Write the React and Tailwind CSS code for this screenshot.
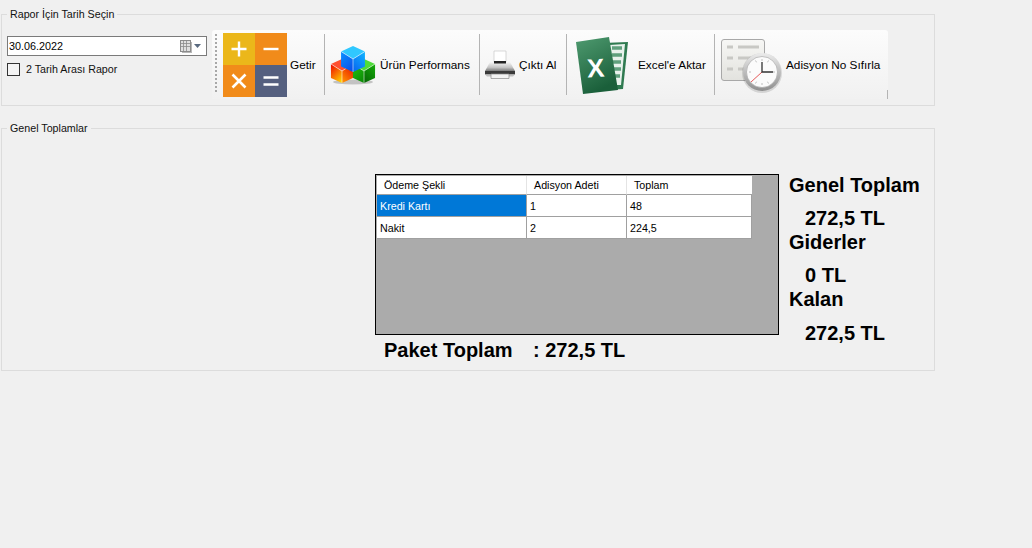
import React from "react";

const cellText = "text-[10.700px] leading-none text-black";

function CalcIcon() {
  return (
    <div className="grid grid-cols-2 w-16 h-16 shrink-0">
      <div className="bg-[#ebb71a] flex items-center justify-center">
        <svg width="20" height="20" viewBox="0 0 20 20" stroke="white" strokeWidth="2.4">
          <path d="M10 2.500v15M2.500 10h15" />
        </svg>
      </div>
      <div className="bg-[#f18b1a] flex items-center justify-center">
        <svg width="20" height="20" viewBox="0 0 20 20" stroke="white" strokeWidth="2.400">
          <path d="M2.500 10h15" />
        </svg>
      </div>
      <div className="bg-[#f18b1a] flex items-center justify-center">
        <svg width="20" height="20" viewBox="0 0 20 20" stroke="white" strokeWidth="2.600">
          <path d="M3.500 3.500l13 13M16.500 3.500l-13 13" />
        </svg>
      </div>
      <div className="bg-[#55607f] flex items-center justify-center">
        <svg width="20" height="20" viewBox="0 0 20 20" stroke="white" strokeWidth="2.400">
          <path d="M2.500 6.500h15M2.500 13.500h15" />
        </svg>
      </div>
    </div>
  );
}

function Cube({ x, y, r, id, top, left, right }) {
  const h = r * 0.58;
  return (
    <g>
      <defs>
        <linearGradient id={id} x1="0.2" y1="0" x2="0.8" y2="1">
          <stop offset="0" stopColor={left[0]} />
          <stop offset="1" stopColor={left[1]} />
        </linearGradient>
        <linearGradient id={id + "r"} x1="0.8" y1="0" x2="0.2" y2="1">
          <stop offset="0" stopColor={right[0]} />
          <stop offset="1" stopColor={right[1]} />
        </linearGradient>
      </defs>
      <path d={`M${x} ${y - r}L${x + r * 0.92} ${y - h}L${x} ${y}L${x - r * 0.92} ${y - h}Z`} fill={top} />
      <path d={`M${x - r * 0.92} ${y - h}L${x} ${y}V${y + r}L${x - r * 0.92} ${y + h}Z`} fill={`url(#${id})`} />
      <path d={`M${x + r * 0.92} ${y - h}L${x} ${y}V${y + r}L${x + r * 0.92} ${y + h}Z`} fill={`url(#${id}r)`} />
      <path d={`M${x} ${y}V${y + r}M${x} ${y}L${x - r * 0.92} ${y - h}M${x} ${y}L${x + r * 0.92} ${y - h}`} stroke="white" strokeOpacity="0.6" strokeWidth="0.900" fill="none" />
    </g>
  );
}

function CubesIcon() {
  return (
    <svg width="46" height="40" viewBox="0 0 46 40" className="shrink-0">
      <ellipse cx="23" cy="37" rx="20" ry="2.500" fill="#000" opacity="0.2" />
      <Cube x={12} y={26} r={12} id="cr" top="#ff5030" left={["#f01400", "#ffd000"]} right={["#e81400", "#ff9000"]} />
      <Cube x={34} y={26} r={12} id="cg" top="#4fdc3a" left={["#22c010", "#0b8a06"]} right={["#14a80a", "#066a04"]} />
      <Cube x={23} y={14} r={13} id="cb" top="#30c8ff" left={["#0a8cff", "#0a50e8"]} right={["#10b0ff", "#0868f0"]} />
    </svg>
  );
}

function PrinterIcon() {
  return (
    <svg width="32" height="30" viewBox="0 0 32 30" className="shrink-0">
      <defs>
        <linearGradient id="pb" x1="0" y1="0" x2="0" y2="1">
          <stop offset="0" stopColor="#f6f6f6" />
          <stop offset="0.6" stopColor="#c4c4c4" />
          <stop offset="1" stopColor="#7a7a7a" />
        </linearGradient>
      </defs>
      <path d="M10 1h12v12H10z" fill="#fff" stroke="#c8c8c8" strokeWidth="0.7" />
      <path d="M6 12h20l5 9H1z" fill="url(#pb)" />
      <path d="M10 11h12v2.500H10z" fill="#222" />
      <path d="M1 21h30v3.500H1z" fill="#3a3a3a" />
      <path d="M1 24.500h30l-2 2H3z" fill="#c0c0c0" />
      <path d="M7 24h18v4.500H7z" fill="#f2f2f2" stroke="#8a8a8a" strokeWidth="0.7" />
    </svg>
  );
}

function ExcelIcon() {
  return (
    <svg width="54" height="59" viewBox="0 0 54 59" className="shrink-0 mt-[3px]">
      <defs>
        <linearGradient id="xg" x1="0" y1="0" x2="0.4" y2="1">
          <stop offset="0" stopColor="#4f9b70" />
          <stop offset="1" stopColor="#1a5f3a" />
        </linearGradient>
      </defs>
      <path d="M28 6l25-1-5 47-16 1z" fill="#2f7a50" />
      <path d="M34 8l16-1-4 41-12 0z" fill="#e8f2ec" />
      <path d="M37 11h10M37 18h10M36 25h10M36 32h10M36 39h9" stroke="#5fa07c" strokeWidth="3.500" />
      <path d="M1 5l33-5 9 53-35 4z" fill="url(#xg)" />
      <text x="12" y="40" fontFamily="Liberation Sans, sans-serif" fontWeight="700" fontSize="26" fill="#fff" transform="rotate(-3 20 32)">X</text>
    </svg>
  );
}

function ClockIcon() {
  return (
    <svg width="62" height="56" viewBox="0 0 62 56" className="shrink-0 mt-[5px]">
      <defs>
        <linearGradient id="dg" x1="0" y1="0" x2="0" y2="1">
          <stop offset="0" stopColor="#f7f7f5" />
          <stop offset="1" stopColor="#e2e2de" />
        </linearGradient>
        <linearGradient id="rg" x1="0" y1="0" x2="0" y2="1">
          <stop offset="0" stopColor="#ececec" />
          <stop offset="1" stopColor="#8e8e8e" />
        </linearGradient>
      </defs>
      <rect x="0.500" y="0.500" width="43" height="41" rx="2.500" fill="url(#dg)" stroke="#a8a8a8" />
      <path d="M6 8h6M17 8h21M6 19h6M17 19h21M6 30h6M17 30h14" stroke="#c8c8c4" strokeWidth="3" />
      <circle cx="41" cy="34" r="20" fill="#000" opacity="0.12" />
      <circle cx="41" cy="33" r="19" fill="url(#rg)" />
      <circle cx="41" cy="33" r="15.500" fill="#fbfbfb" stroke="#a0a0a0" strokeWidth="0.6" />
      <path d="M41 20v2M41 44v2M28 33h2M52 33h2M34.500 21.500l1 1.800M47.500 21.500l-1 1.800M34.500 44.500l1-1.800M47.500 44.500l-1-1.800" stroke="#b0b0b0" strokeWidth="0.8" />
      <path d="M41 33l-11 10" stroke="#e03030" strokeWidth="0.8" />
      <path d="M41 23v10h11" stroke="#333" strokeWidth="1.300" fill="none" />
    </svg>
  );
}

function ToolbarItem({ width, gap, pad, icon, label, last }) {
  return (
    <div className={`flex items-center h-full ${width} ${pad}`}>
      {icon}
      <span className={`text-[11.800px] leading-[16px] pt-px text-black whitespace-nowrap ${gap}`}>{label}</span>
      {!last && <div className="ml-auto w-px h-[61px] bg-[#b4b4b4] shrink-0" />}
    </div>
  );
}

function Group({ title, className, children }) {
  return (
    <div className={`relative border border-[#dcdcdc] ${className}`}>
      <span className="absolute -top-[8px] left-[5px] bg-[#f0f0f0] px-[3px] text-[10.700px] leading-[15px] text-[#111] whitespace-nowrap">
        {title}
      </span>
      {children}
    </div>
  );
}

function Label({ children }) {
  return (
    <div className="flex items-center h-[24px] text-[20px] font-bold leading-none text-black whitespace-nowrap">
      {children}
    </div>
  );
}

function Value({ children, last }) {
  return (
    <div className={`h-[33px] pl-4 text-[20px] font-bold leading-[20px] text-black whitespace-nowrap ${last ? "pt-[12px]" : "pt-[11px]"}`}>
      {children}
    </div>
  );
}

export default function App() {
  const rows = [
    ["Kredi Kartı", "1", "48"],
    ["Nakit", "2", "224,5"],
  ];

  return (
    <div className="w-[1032px] h-[548px] overflow-hidden bg-[#f0f0f0] pt-[14px] pl-px font-['Liberation_Sans',sans-serif]">
      <Group title="Rapor İçin Tarih Seçin" className="w-[934px] h-[92px] flex">
        <div className="w-[210px] pl-[5px] pt-[21px] shrink-0">
          <div className="flex items-center justify-between w-[200px] h-[20px] bg-white border border-[#7a7a7a] pl-px pr-[5px]">
            <span className="text-[10.800px] text-black">30.06.2022</span>
            <span className="flex items-center gap-[2px]">
              <svg width="12" height="13" viewBox="0 0 12 13">
                <rect x="2" y="2" width="10" height="11" fill="#b8b8b8" />
                <rect x="0.500" y="0.500" width="10" height="11" fill="#e0e0e0" stroke="#8c8c8c" />
                <path d="M0.500 3.500h10M0.500 6.500h10M3.500 0.500v11M6.500 0.500v11" stroke="#8c8c8c" strokeWidth="0.8" />
              </svg>
              <svg width="7" height="4" viewBox="0 0 7 4">
                <path d="M0 0h7L3.500 4z" fill="#5a6a80" />
              </svg>
            </span>
          </div>
          <label className="flex items-center mt-[7px]">
            <span className="w-[13px] h-[13px] bg-[#f4f4f4] border border-[#333] shrink-0" />
            <span className="ml-[6px] text-[10.700px] leading-[13px] text-[#111]">2 Tarih Arası Rapor</span>
          </label>
        </div>

        <div className="flex items-center mt-[15px] h-[69px] w-[676px] rounded-t-[3px] bg-gradient-to-b from-[#fcfcfc] to-[#f1f1f1] relative">
          <div className="flex items-center h-full w-[113px]">
            <div className="ml-[3px] mr-[6px] h-[58px] border-l-2 border-dotted border-[#a8a8a8] self-start mt-[4px] shrink-0" />
            <CalcIcon />
            <span className="ml-[3px] text-[11.800px] leading-[16px] pt-px text-black">Getir</span>
            <div className="ml-auto w-px h-[61px] bg-[#b4b4b4] shrink-0" />
          </div>
          <ToolbarItem width="w-[155px]" pad="pl-[5px]" gap="ml-[4px]" icon={<CubesIcon />} label="Ürün Performans" />
          <ToolbarItem width="w-[87px]" pad="pl-[4px]" gap="ml-[3px]" icon={<PrinterIcon />} label="Çıktı Al" />
          <ToolbarItem width="w-[148px]" pad="pl-[8px]" gap="ml-[9px]" icon={<ExcelIcon />} label="Excel'e Aktar" />
          <ToolbarItem width="w-[173px]" pad="pl-[6px]" gap="ml-[3px]" icon={<ClockIcon />} label="Adisyon No Sıfırla" last />
          <div className="absolute right-0 bottom-0 w-px h-[9px] bg-[#b4b4b4]" />
        </div>
      </Group>

      <Group title="Genel Toplamlar" className="mt-[22px] w-[934px] h-[243px] flex pt-[45px] pl-[373px]">
        <div className="w-[404px] shrink-0">
          <div className="h-[161px] bg-[#ababab] border border-black pl-px pt-px">
            <div className="grid grid-cols-[150px_100px_125px] w-[375px]">
              <div className={`${cellText} h-[19px] bg-white border-r border-b border-r-[#e4e4e4] border-b-[#a0a0a0] flex items-center pl-[7px]`}>Ödeme Şekli</div>
              <div className={`${cellText} h-[19px] bg-white border-r border-b border-r-[#e4e4e4] border-b-[#a0a0a0] flex items-center pl-[7px]`}>Adisyon Adeti</div>
              <div className={`${cellText} h-[19px] bg-white border-b border-b-[#a0a0a0] flex items-center pl-[7px]`}>Toplam</div>
              {rows.map((row, i) =>
                row.map((val, j) => (
                  <div
                    key={i + "-" + j}
                    className={`h-[22px] flex items-center pl-[3px] pt-px text-[10.700px] leading-none border-b border-r border-b-[#a0a0a0] border-r-[#a0a0a0] ${i === 0 && j === 0 ? "bg-[#0078d7] text-white" : "bg-white text-black"}`}
                  >
                    {val}
                  </div>
                ))
              )}
            </div>
          </div>
          <div className="flex items-center h-[29px] pl-[9px] text-[20px] font-bold leading-none text-black whitespace-nowrap">
            <span className="w-[149px]">Paket Toplam</span>
            <span>: 272,5 TL</span>
          </div>
        </div>

        <div className="ml-[10px] -mt-px">
          <Label>Genel Toplam</Label>
          <Value>272,5 TL</Value>
          <Label>Giderler</Label>
          <Value>0 TL</Value>
          <Label>Kalan</Label>
          <Value last>272,5 TL</Value>
        </div>
      </Group>
    </div>
  );
}
